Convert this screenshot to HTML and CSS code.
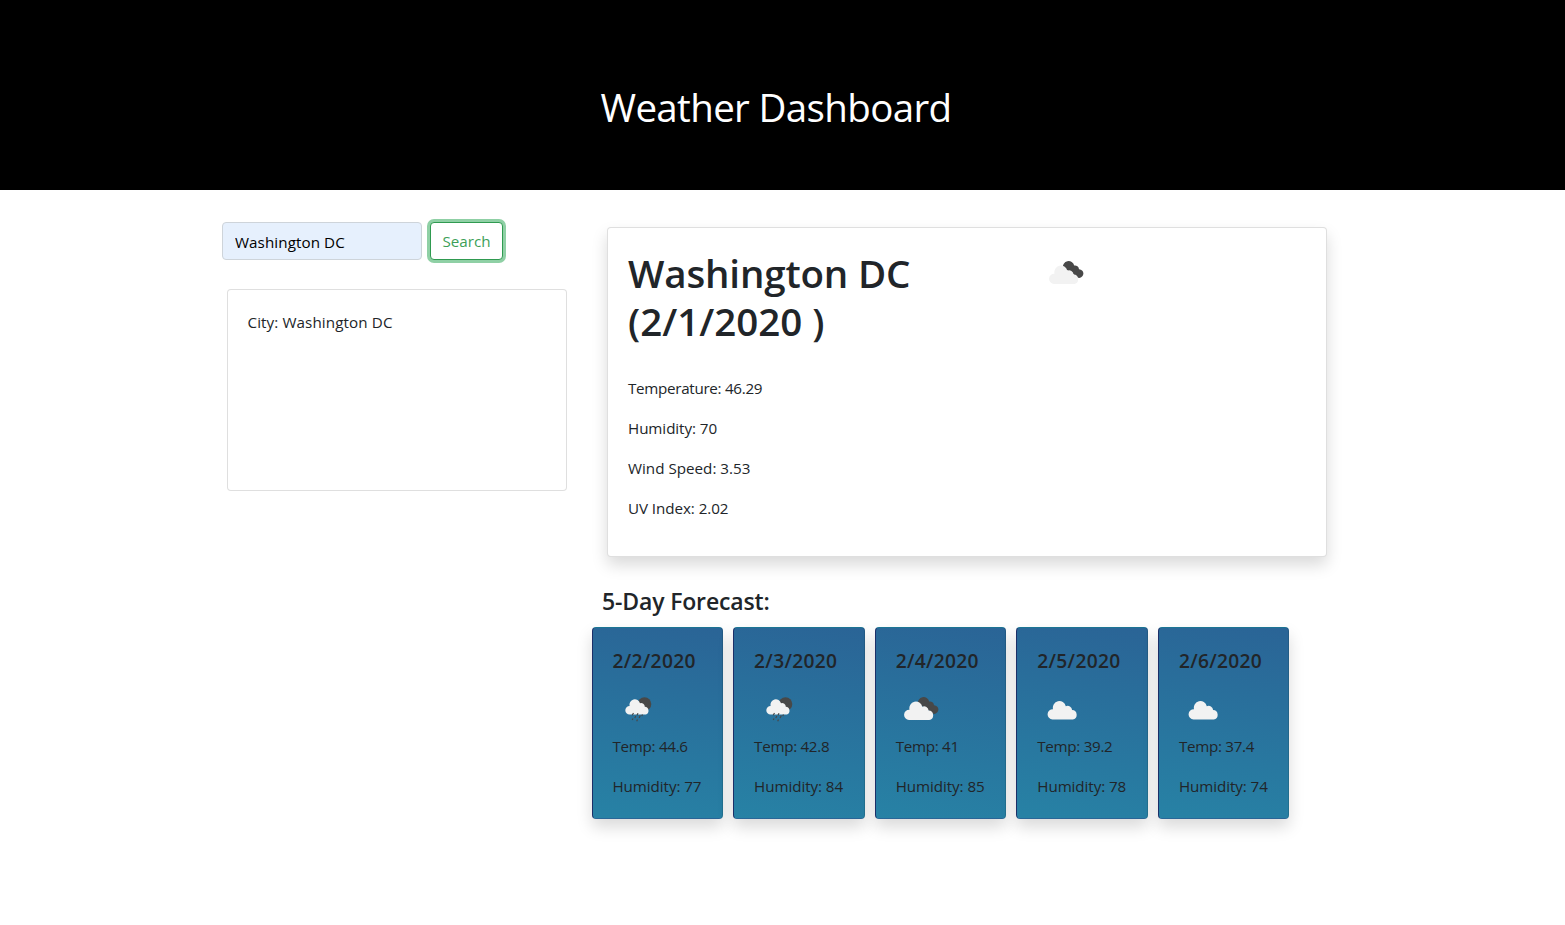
FILE: index.html
```html
<!DOCTYPE html>
<html lang="en">
<head>
<meta charset="utf-8">
<title>Weather Dashboard</title>
<link rel="stylesheet" href="styles.css">
</head>
<body>
<svg class="symbols" width="0" height="0" aria-hidden="true">
  <symbol id="cloud" viewBox="0 0 30 20"><path d="M5 19.5A5 5 0 0 1 5.5 9.2A6.5 6.5 0 0 1 18.3 6.2A4.5 4.5 0 0 1 24.6 10A4.8 4.8 0 0 1 25.3 19.5Z"/></symbol>
  <symbol id="broken" viewBox="0 0 36 24"><path class="dark" d="M14 7A5.7 5.7 0 0 1 25.2 4.6A4 4 0 0 1 30 8.3A4.3 4.3 0 1 1 28.5 16.6L23 12L18 9Z"/><path d="M5 23A5 5 0 0 1 5.5 12.7A6.5 6.5 0 0 1 18.3 9.7A4.5 4.5 0 0 1 24.6 13.5A4.8 4.8 0 0 1 25.3 23Z"/></symbol>
  <symbol id="rain" viewBox="0 0 28 26"><circle class="dark" cx="19.5" cy="7" r="6.8"/><path d="M4.6 17.6A4.2 4.2 0 0 1 4.6 9A5.2 5.2 0 0 1 15 6.3A3.7 3.7 0 0 1 19.8 9.8A4 4 0 0 1 20.7 17.6Z"/><path class="drops" d="M8.5 16l-1.3 2.3M13 16.2l-1 2M10.8 19l-1 2M15.3 18.4l-1.2 2.5M8 21.5l-.8 1.5M12.5 22.5l-.8 1.8M17.5 17.5l-.7 1.5"/></symbol>
</svg>
<header class="banner"><h1 class="banner-title">Weather Dashboard</h1></header>
<main class="container">
  <aside class="sidebar">
    <form class="search"><input class="search-input" type="text" value="Washington DC"><button class="search-button" type="button">Search</button></form>
    <section class="card history"><p class="history-item">City: Washington DC</p></section>
  </aside>
  <div class="content">
    <section class="card current">
      <div class="current-head"><h2 class="current-title"><span class="city">Washington DC</span><br><span class="date">(2/1/2020 )</span></h2><svg class="current-icon"><use href="#broken"/></svg></div>
      <p class="temperature">Temperature: 46.29</p><p class="humidity">Humidity: 70</p><p class="wind">Wind Speed: 3.53</p><p class="uv">UV Index: 2.02</p>
    </section>
    <h3 class="forecast-title">5-Day Forecast:</h3>
    <section class="forecast">
      <article class="card day"><h4>2/2/2020</h4><svg class="icon-rain"><use href="#rain"/></svg><p class="temp">Temp: 44.6</p><p>Humidity: 77</p></article>
      <article class="card day"><h4>2/3/2020</h4><svg class="icon-rain"><use href="#rain"/></svg><p class="temp">Temp: 42.8</p><p>Humidity: 84</p></article>
      <article class="card day"><h4>2/4/2020</h4><svg class="icon-broken"><use href="#broken"/></svg><p class="temp">Temp: 41</p><p>Humidity: 85</p></article>
      <article class="card day"><h4>2/5/2020</h4><svg class="icon-cloud"><use href="#cloud"/></svg><p class="temp">Temp: 39.2</p><p>Humidity: 78</p></article>
      <article class="card day"><h4>2/6/2020</h4><svg class="icon-cloud"><use href="#cloud"/></svg><p class="temp">Temp: 37.4</p><p>Humidity: 74</p></article>
    </section>
  </div>
</main>
</body>
</html>
```
FILE: styles.css
```css
* { box-sizing: border-box; }
body { margin: 0; min-height: 925px; background: #fff; color: #212529; font: 400 15.2px/24px "Open Sans", "Noto Sans", sans-serif; }
h1, h2, h3, h4, p { margin: 0; }
svg { display: block; fill: #f2f2f2; }
.symbols { position: absolute; }
.dark { fill: #484848; }
.drops { fill: none; stroke: #484848; stroke-width: 1.2; }
.banner { height: 190px; background: #000; color: #fff; padding: 83px 0 0 600.5px; }
.banner-title { font-size: 38.5px; line-height: 48px; font-weight: 400; letter-spacing: -.65px; }
.container { display: flex; width: 1140px; margin: 0 auto; }
.sidebar { width: 379px; padding: 32px 0 0 9.5px; }
.search { display: flex; gap: 8px; }
.search-input { width: 200px; height: 38px; padding: 1px 12px 0; border: 1px solid #ced4da; border-radius: 4px; background: #e6f0fd; color: #000; font: inherit; letter-spacing: .08px; }
.search-button { width: 73px; height: 38px; padding: 0; border: 1px solid #2f9a50; border-radius: 4px; background: #fff; color: #3c9f58; font: inherit; box-shadow: 0 0 0 3px #8fd0a5; }
.card { border: 1px solid rgba(0, 0, 0, .125); border-radius: 4px; background: #fff; padding: 20px; }
.history { width: 340px; height: 202px; margin: 29px 0 0 5px; }
.history-item { margin-left: -.5px; letter-spacing: .1px; }
.content { padding: 37px 0 0; }
.current { width: 720px; height: 330px; margin-left: 15.5px; box-shadow: 0 8px 16px rgba(0, 0, 0, .15); }
.current-head { display: flex; height: 128px; padding-top: 1px; }
.current-title { width: 421px; font-size: 38.5px; line-height: 48px; font-weight: 600; letter-spacing: -.15px; }
.date { letter-spacing: 0; }
.current-icon { width: 36px; height: 24px; margin-top: 12px; }
.current p { margin-bottom: 16px; }
.current .temperature { letter-spacing: -.3px; }
.current .humidity, .current .uv { letter-spacing: -.07px; }
.forecast-title { margin: 30px 0 11px 10.5px; font-size: 23px; line-height: 29px; font-weight: 600; letter-spacing: -.15px; }
.forecast { display: flex; gap: 10px; }
.day { width: 131.6px; height: 192px; background: linear-gradient(190deg, #2a6496, #2782a5); border-left-color: #1c2f68; box-shadow: 0 8px 16px rgba(0, 0, 0, .15); border-top-color: rgba(0, 90, 110, .3); border-bottom-color: transparent; }
.day h4 { height: 49px; padding-top: 1px; font-size: 19.2px; line-height: 24px; font-weight: 600; letter-spacing: .3px; }
.day p { margin-bottom: 16px; white-space: nowrap; letter-spacing: -.08px; }
.day .temp { letter-spacing: -.3px; }
.icon-rain { width: 28px; height: 26px; margin: 0 0 11px 12px; }
.icon-broken { width: 36px; height: 24px; margin: 0 0 13px 8px; }
.icon-cloud { width: 31px; height: 20px; margin: 3px 0 14px 9.5px; }
```
